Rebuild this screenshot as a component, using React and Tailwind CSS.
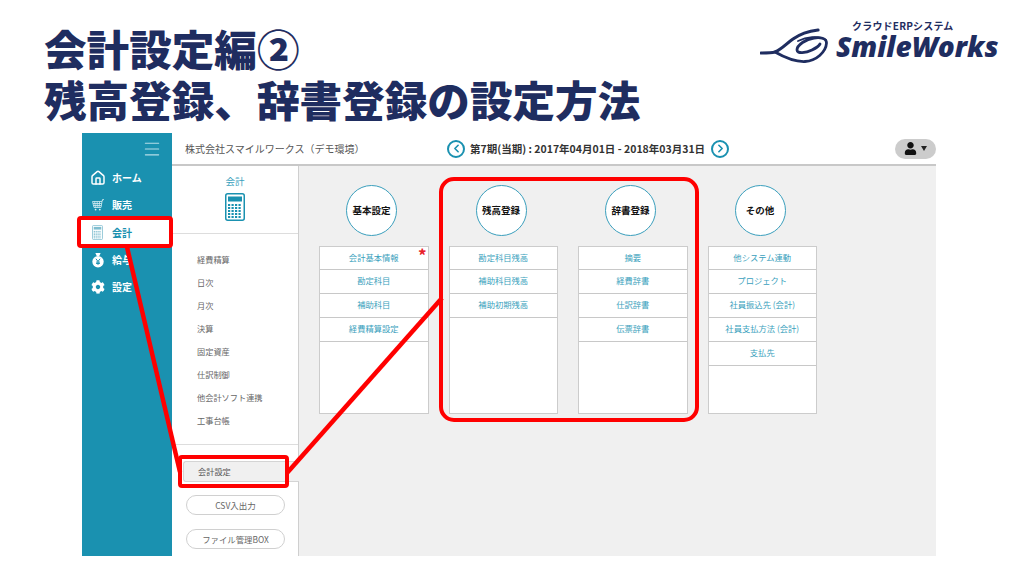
import React from 'react';
import { Home, ChevronLeft, ChevronRight, Menu } from 'lucide-react';
import { FaUser, FaCog } from 'react-icons/fa';

const font = "font-['Noto_Sans_CJK_JP','Noto_Sans',sans-serif]";

const MoneyBag = () => (
  <svg viewBox="0 0 16 18" className="w-[14px] h-[16px]">
    <path d="M5 1 L11 1 L9.5 4.5 L6.5 4.5 Z" fill="white" />
    <circle cx="8" cy="11" r="6.5" fill="white" />
    <path d="M5.6 7.6 L8 10.6 L10.4 7.6 M8 10.6 V14.6 M5.8 11.4 H10.2 M5.8 13 H10.2" stroke="#1a91b0" strokeWidth="1.1" fill="none" />
  </svg>
);

const Cart = () => (
  <svg viewBox="0 0 12 12" className="w-[12px] h-[12px]" fill="none" stroke="#d8eef3" strokeWidth="0.8">
    <path d="M0.5 2.5 H10 L9 8.5 H2 Z" />
    <path d="M2.7 2.5 L3.4 8.5 M5.2 2.5 V8.5 M7.6 2.5 L7 8.5 M1 4.5 H9.6 M1.5 6.5 H9.3" />
    <path d="M10 2.5 L10.6 0.6 H11.8" strokeWidth="1" />
    <circle cx="3.6" cy="10.6" r="0.9" fill="#d8eef3" stroke="none" />
    <circle cx="7.8" cy="10.6" r="0.9" fill="#d8eef3" stroke="none" />
  </svg>
);

const Calc = ({ color, small }) => (
  <svg viewBox="0 0 20 28" className={small ? 'w-[11px] h-[15px]' : 'w-[20px] h-[28px]'}>
    <rect x="0.75" y="0.75" width="18.5" height="26.5" rx="2" fill="white" stroke={color} strokeWidth="1.5" />
    <rect x="3" y="3.5" width="14" height="5" fill={color} />
    {[11, 14, 17, 20, 23].map((y) =>
      [3, 6.5, 10, 13.5].map((x) => <rect key={x + '-' + y} x={x} y={y} width="2.2" height="2" fill={color} />)
    )}
  </svg>
);

const sideItems = [
  { label: 'ホーム', icon: <Home size={16} strokeWidth={2.2} className="text-white" /> },
  { label: '販売', icon: <Cart /> },
  { label: '会計', icon: <Calc color="#7fbdcf" small />, active: true },
  { label: '給与', icon: <MoneyBag /> },
  { label: '設定', icon: <FaCog size={14} className="text-white" /> },
];

const subItems = ['経費精算', '日次', '月次', '決算', '固定資産', '仕訳制御', '他会計ソフト連携', '工事台帳'];

const columns = [
  { title: '基本設定', items: ['会計基本情報', '勘定科目', '補助科目', '経費精算設定'], star: true },
  { title: '残高登録', items: ['勘定科目残高', '補助科目残高', '補助初期残高'] },
  { title: '辞書登録', items: ['摘要', '経費辞書', '仕訳辞書', '伝票辞書'] },
  { title: 'その他', items: ['他システム連動', 'プロジェクト', '社員振込先 (会計)', '社員支払方法 (会計)', '支払先'] },
];

export default function App() {
  return (
    <div className={`relative w-[1024px] h-[576px] overflow-hidden bg-white ${font}`}>
      {/* slide header */}
      <div className="h-[133px] flex justify-between pl-[44px] pr-[26px] pt-[22px]">
        <h1 className="text-[42.6px] leading-[51px] font-black text-[#1f2d60] whitespace-nowrap">
          会計設定編②
          <br />
          残高登録、辞書登録の設定方法
        </h1>
        <div className="w-[238px] -mt-[2px]">
          <div className="text-[10px] leading-[12px] font-bold text-[#1f2d60] tracking-[0.2px] pl-[92px] whitespace-nowrap">クラウドERPシステム</div>
          <div className="flex items-start">
            <svg viewBox="0 0 68 36" className="w-[68px] h-[36px] shrink-0 -mt-[4px]" fill="none" stroke="#1f2d60" strokeLinecap="round">
              <path d="M1 25 C6 25 11 25 15 24 C22 21 27 15 33 11 C40 6 50 3 58 2" strokeWidth="3.2" />
              <path d="M15 24 C22 28 33 34 45 33.5 C56 33 66 24 66.5 15 C66.5 10 60 9 54 10 C46 11 37 17 37 22 C37 26 46 25 52 22 C56 20 59 18 60 16" strokeWidth="2.8" />
              <path d="M38 13 C46 9 58 7 66 12" strokeWidth="1.8" />
            </svg>
            <span className="ml-[8px] mt-[2px] font-['Open_Sans',sans-serif] italic font-extrabold text-[28px] leading-[24px] text-[#1f2d60] whitespace-nowrap">SmileWorks</span>
          </div>
        </div>
      </div>

      {/* app screenshot */}
      <div className="ml-[82px] w-[854px] h-[423px] flex">
        <div className="w-[90px] shrink-0 bg-[#1a91b0]">
          <div className="h-[31px] flex justify-end items-center pr-[10px]">
            <Menu size={20} strokeWidth={1.3} className="text-[#b5dde7]" />
          </div>
          <div className="flex flex-col">
            {sideItems.map((s) => (
              <div key={s.label} className={`h-[27.3px] flex items-center ${s.active ? 'bg-white' : ''}`}>
                <div className="w-[30px] flex justify-center pl-[1px]">{s.icon}</div>
                <span className={`text-[10px] font-bold ${s.active ? 'text-[#1a91b0]' : 'text-white'}`}>{s.label}</span>
              </div>
            ))}
          </div>
        </div>

        <div className="flex-1 flex flex-col">
          <div className="h-[33px] shrink-0 flex items-center border-b-2 border-[#c8c8c8] pl-[13px] pr-0">
            <span className="text-[10px] text-[#555] w-[262px] whitespace-nowrap">株式会社スマイルワークス（デモ環境）</span>
            <div className="w-[18px] h-[18px] rounded-full border-2 border-[#1a91b0] flex items-center justify-center">
              <ChevronLeft size={13} strokeWidth={3} className="text-[#1a91b0]" />
            </div>
            <span className="text-[10.5px] font-bold text-[#333] w-[246px] pl-[5px] whitespace-nowrap">第7期(当期) : 2017年04月01日 - 2018年03月31日</span>
            <div className="w-[18px] h-[18px] rounded-full border-2 border-[#1a91b0] flex items-center justify-center">
              <ChevronRight size={13} strokeWidth={3} className="text-[#1a91b0]" />
            </div>
            <div className="ml-auto w-[41px] h-[20px] rounded-full bg-[#cccccc] flex items-center justify-center gap-[4px]">
              <FaUser size={13} className="text-[#111]" />
              <div className="w-0 h-0 border-l-[3.5px] border-r-[3.5px] border-t-[5px] border-l-transparent border-r-transparent border-t-[#222]"></div>
            </div>
          </div>

          <div className="flex-1 flex min-h-0">
            <div className="w-[127px] shrink-0 border-r border-[#cfcfcf] flex flex-col">
              <div className="h-[68px] shrink-0 border-b border-[#ddd] flex flex-col items-center pt-[8px]">
                <span className="text-[9.5px] leading-[15px] text-[#3a9fbd]">会計</span>
                <div className="mt-[4px]"><Calc color="#1a91b0" /></div>
              </div>
              <div className="h-[211px] shrink-0 border-b border-[#ddd] pt-[14px] pl-[25px] flex flex-col">
                {subItems.map((t) => (
                  <div key={t} className="h-[22.9px] flex items-center text-[8.2px] text-[#666]">{t}</div>
                ))}
              </div>
              <div className="relative mt-[16px] ml-[11px] -mr-[1px] h-[21px] rounded-l-[3px] bg-[#f0f0f0] border border-r-0 border-[#d4d4d4] flex items-center pl-[14px] text-[8.2px] text-[#555]">会計設定</div>
              <div className="mt-[13px] ml-[14px] w-[99px] h-[20px] rounded-full border-[1.5px] border-[#d0d0d0] flex items-center justify-center text-[8.5px] text-[#666]">CSV入出力</div>
              <div className="mt-[14px] ml-[14px] w-[99px] h-[20px] rounded-full border-[1.5px] border-[#d0d0d0] flex items-center justify-center text-[8.4px] text-[#666]">ファイル管理BOX</div>
            </div>

            <div className="flex-1 bg-[#f0f0f0] flex gap-[20px] pl-[20px] pt-[19px] items-start">
              {columns.map((c) => (
                <div key={c.title} className="w-[109.5px] flex flex-col items-start">
                  <div className="ml-[27px] w-[51px] h-[51px] rounded-full bg-white border-[1.5px] border-[#3a9fbd] flex items-center justify-center pb-[1px] text-[9.5px] font-bold text-[#111] whitespace-nowrap">{c.title}</div>
                  <div className="relative mt-[10px] w-full h-[168px] bg-white border-[1.5px] border-[#cccccc] flex flex-col">
                    {c.items.map((t) => (
                      <div key={t} className="h-[24px] first:h-[22.5px] shrink-0 border-b border-[#c8c8c8] flex items-center justify-center pb-[1px] text-[8.3px] text-[#3a9fbd] whitespace-nowrap">{t}</div>
                    ))}
                    {c.star && <span className="absolute right-[1px] top-[-1px] text-[17px] leading-[18px] font-bold text-[#e8202a]">*</span>}
                  </div>
                </div>
              ))}
            </div>
          </div>
        </div>
      </div>

      {/* red callouts over the screenshot */}
      <svg className="absolute inset-0 w-[1024px] h-[576px] pointer-events-none" viewBox="0 0 1024 576">
        <line x1="127" y1="247" x2="180" y2="472" stroke="#ff0000" strokeWidth="4.5" />
        <line x1="287" y1="473" x2="442" y2="298" stroke="#ff0000" strokeWidth="4.5" />
      </svg>
      <div className="absolute left-[77px] top-[216px] w-[96px] h-[32px] border-[4.5px] border-[#ff0000] rounded-[4px]"></div>
      <div className="absolute left-[178px] top-[455px] w-[111px] h-[33px] border-[4.5px] border-[#ff0000] rounded-[4px]"></div>
      <div className="absolute left-[439px] top-[177px] w-[260px] h-[245px] border-[4.5px] border-[#ff0000] rounded-[15px]"></div>
    </div>
  );
}
